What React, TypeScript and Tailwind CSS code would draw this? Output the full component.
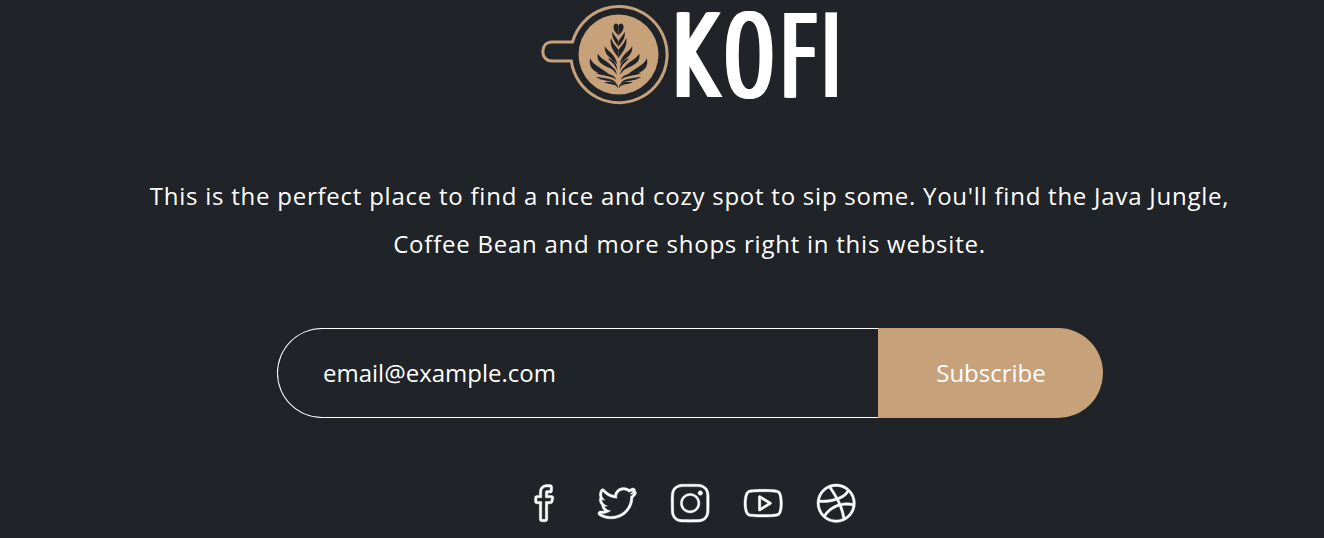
import React from 'react';
import {
  SlSocialFacebook,
  SlSocialTwitter,
  SlSocialInstagram,
  SlSocialYoutube,
  SlSocialDribbble,
} from 'react-icons/sl';

const socials = [
  { name: 'Facebook', Icon: SlSocialFacebook },
  { name: 'Twitter', Icon: SlSocialTwitter },
  { name: 'Instagram', Icon: SlSocialInstagram },
  { name: 'YouTube', Icon: SlSocialYoutube },
  { name: 'Dribbble', Icon: SlSocialDribbble },
];

// Left half of the latte-art leaf; the right half is its mirror image.
function LeafHalf() {
  return (
    <g>
      <path d="M100 62C94 54 84 48 85 34C87 23 97 24 100 32Z" />
      <path d="M100 95C93 84 79 72 81 50C87 60 94 68 100 79Z" />
      <path d="M100 129C90 112 72 98 77 68C82 84 90 91 100 104Z" />
      <path d="M96 149C88 134 55 124 59 93C66 110 92 116 96 149Z" />
      <path d="M96 166C90 148 78 142 68 130C84 134 96 144 96 166Z" />
      <path d="M84 160C60 154 32 144 38 116C50 136 74 140 84 160Z" />
      <path d="M95 180C86 162 74 160 56 150C76 150 93 158 95 180Z" />
      <path d="M76 184C44 178 6 168 15 130C24 154 60 162 76 184Z" />
      <path d="M93 194C78 180 50 184 32 174C56 174 86 174 93 194Z" />
      <path d="M94 207C78 194 50 200 32 185C56 190 88 188 94 207Z" />
      <path d="M98 219C92 206 74 210 56 202C78 200 98 200 99 219Z" />
    </g>
  );
}

function Cup() {
  return (
    <svg viewBox="0 0 130 100" className="h-[100px] w-[130px] shrink-0" aria-hidden="true">
      <path
        d="M31.300 37.500H10.500C-1.500 37.500 -1.500 56.500 10.500 56.500H30A48.100 48.100 0 1 0 31.300 37.500Z"
        fill="none"
        stroke="#c7a17a"
        strokeWidth="3"
        transform="translate(0.300 -0.600)"
      />
      <circle cx="77.500" cy="49.500" r="40" fill="#c7a17a" />
      <g fill="#202327" transform="translate(44.200 10) scale(0.33333)">
        <LeafHalf />
        <g transform="matrix(-1 0 0 1 200 0)">
          <LeafHalf />
        </g>
      </g>
    </svg>
  );
}

function Wordmark() {
  return (
    <div className="flex h-[104px] pt-[2px] font-['DejaVu_Sans'] text-[116.5px] leading-[100px] text-white">
      <span className="block w-[50px]">
        <span className="-ml-px block w-max origin-left scale-x-[0.59] [text-shadow:2px_0_#fff,4px_0_#fff,6px_0_#fff,8px_0_#fff,10px_0_#fff]">K</span>
      </span>
      <span className="block w-[57px] font-['DejaVu_Sans_Mono']">
        <span className="block w-max origin-left scale-x-[0.75] [text-shadow:2px_0_#fff,4px_0_#fff,5px_0_#fff]">O</span>
      </span>
      <span className="block w-[36px]">
        <span className="block w-max origin-left scale-x-[0.55] [text-shadow:2px_0_#fff,4px_0_#fff,6px_0_#fff,8px_0_#fff,10px_0_#fff]">F</span>
      </span>
      <span className="block w-[35px]">
        <span className="block w-max origin-left">I</span>
      </span>
    </div>
  );
}

export default function App() {
  return (
    <footer className="h-[538px] overflow-hidden bg-[#202327] pl-14 font-['Open_Sans',sans-serif] text-2xl text-white">
      <div className="flex flex-col items-center">
        <div className="flex h-[105px] w-[298px] pt-[5px]">
          <Cup />
          <Wordmark />
        </div>
        <p className="mt-[67px] w-[1121px] pr-px text-center leading-[48px] tracking-[0.76px]">
          This is the perfect place to find a nice and cozy spot to sip some. You'll find the Java Jungle,
          <br />
          Coffee Bean and more shops right in this website.
        </p>
        <form className="mt-[60px] flex h-[90px] w-[826px]">
          <input
            type="email"
            placeholder="email@example.com"
            className="w-[601px] rounded-l-full border border-r-0 border-white bg-transparent px-[45px] text-white outline-none placeholder:text-white"
          />
          <button type="button" className="w-[225px] rounded-r-[45px] bg-[#c7a17a] pl-px text-white">
            Subscribe
          </button>
        </form>
        <div className="mt-[66px] flex gap-[34.600px]">
          {socials.map(({ name, Icon }) => (
            <a key={name} aria-label={name}>
              <Icon className="size-[38.400px] overflow-visible stroke-white stroke-[12]" />
            </a>
          ))}
        </div>
      </div>
    </footer>
  );
}
